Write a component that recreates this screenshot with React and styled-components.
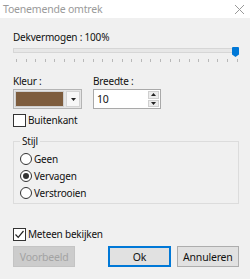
import React from "react";
import styled, { createGlobalStyle } from "styled-components";

const GlobalStyle = createGlobalStyle`
  html, body {
    margin: 0;
    padding: 0;
    background: #f0f0f0;
  }
  body {
    font-family: "Noto Sans", "Segoe UI", sans-serif;
    font-size: 10px;
    letter-spacing: -0.2px;
    color: #111;
  }
`;

const Window = styled.div`
  width: 250px;
  height: 279px;
  background: #f0f0f0;
  display: flex;
  flex-direction: column;
  overflow: hidden;
`;

const TitleBar = styled.div`
  height: 18px;
  background: #fff;
  display: flex;
  align-items: center;
  justify-content: space-between;
  padding: 0 6px 0 3px;
`;

const Title = styled.span`
  color: #9a9a9a;
  line-height: 16px;
  font-size: 10.5px;
`;

const Content = styled.div`
  padding: 11px 11px 0 13px;
  display: flex;
  flex-direction: column;
`;

const Label = styled.div`
  line-height: 16px;
  white-space: nowrap;
`;

const Slider = styled.div`
  position: relative;
  height: 28px;
`;

const Track = styled.div`
  margin-top: 3px;
  height: 3px;
  border: 1px solid #d6d6d6;
  background: #e7e7e7;
  margin-right: 2px;
`;

const Thumb = styled.div`
  position: absolute;
  top: 2px;
  right: 0;
  width: 7px;
  height: 10px;
  background: #0078d7;
  border-radius: 1px 1px 0 0;
  clip-path: polygon(0 0, 100% 0, 100% 75%, 50% 100%, 0 75%);
`;

const Ticks = styled.div`
  display: flex;
  justify-content: space-between;
  padding: 0 1px 0 3px;
  margin-top: 6px;
`;

const Tick = styled.span`
  width: 1px;
  height: 3px;
  background: #b8b8b8;
`;

const FieldRow = styled.div`
  display: flex;
  gap: 11px;
`;

const Field = styled.div`
  display: flex;
  flex-direction: column;
  width: ${(p) => p.w}px;
`;

const Combo = styled.div`
  height: 20px;
  box-sizing: border-box;
  border: 1px solid #b4b4b4;
  background: #e5e5e5;
  display: flex;
  padding: 1px;
  gap: 2px;
`;

const Swatch = styled.div`
  flex: 1;
  background: ${(p) => p.color};
  border: 1px solid #cfcfcf;
`;

const DropButton = styled.div`
  width: 12px;
  background: #f7f7f7;
  border: 1px solid #d4d4d4;
  display: flex;
  align-items: center;
  justify-content: center;
`;

const SpinBox = styled.div`
  height: 20px;
  box-sizing: border-box;
  border: 1px solid #a9a9a9;
  background: #fff;
  display: flex;
  align-items: center;
  padding: 1px 1px 1px 3px;
`;

const SpinValue = styled.span`
  flex: 1;
  line-height: 16px;
  font-size: 10.5px;
`;

const SpinButtons = styled.div`
  display: flex;
  flex-direction: column;
  gap: 1px;
  width: 11px;
  height: 16px;
`;

const SpinButton = styled.div`
  flex: 1;
  background: #ececec;
  border: 1px solid #cfcfcf;
  display: flex;
  align-items: center;
  justify-content: center;
`;

const CheckRow = styled.label`
  display: flex;
  align-items: center;
  gap: 2px;
  line-height: 16px;
  margin-top: ${(p) => p.mt || 0}px;
`;

const Box = styled.span`
  width: 13px;
  height: 13px;
  box-sizing: border-box;
  border: 1px solid #333;
  background: #fff;
  display: flex;
  align-items: center;
  justify-content: center;
`;

const Group = styled.fieldset`
  margin: 5px 0 0 0;
  padding: 1px 0 2px 6px;
  border: 1px solid #dcdcdc;
  display: flex;
  flex-direction: column;
`;

const Legend = styled.legend`
  padding: 0 2px;
  line-height: 16px;
`;

const RadioRow = styled.div`
  display: flex;
  align-items: center;
  height: 17px;
  gap: 2px;
`;

const Radio = styled.span`
  width: 12px;
  height: 12px;
  box-sizing: border-box;
  border: 1px solid #333;
  border-radius: 50%;
  background: #fff;
  display: flex;
  align-items: center;
  justify-content: center;
  &::after {
    content: "";
    width: 6px;
    height: 6px;
    border-radius: 50%;
    background: ${(p) => (p.checked ? "#333" : "transparent")};
  }
`;

const Buttons = styled.div`
  display: flex;
  margin-top: 4px;
`;

const Button = styled.div`
  width: 63px;
  height: 21px;
  box-sizing: border-box;
  display: flex;
  align-items: center;
  justify-content: center;
  font-size: 10.5px;
  background: ${(p) => (p.disabled ? "#cccccc" : "#e1e1e1")};
  color: ${(p) => (p.disabled ? "#a3a3a3" : "#111")};
  border: ${(p) =>
    p.primary ? "2px solid #0078d7" : p.disabled ? "1px solid #c4c4c4" : "1px solid #adadad"};
  margin-left: ${(p) => p.ml || 0}px;
`;

const Arrow = ({ up }) => (
  <svg width="5" height="3" viewBox="0 0 5 3">
    <path d={up ? "M0 3 L2.5 0 L5 3 Z" : "M0 0 L5 0 L2.5 3 Z"} fill="#222" />
  </svg>
);

export default function App() {
  return (
    <>
      <GlobalStyle />
      <Window>
        <TitleBar>
          <Title>Toenemende omtrek</Title>
          <svg width="9" height="9" viewBox="0 0 9 9">
            <path d="M0 0 L9 9 M9 0 L0 9" stroke="#999" strokeWidth="1" />
          </svg>
        </TitleBar>
        <Content>
          <Label>Dekvermogen : 100%</Label>
          <Slider>
            <Track />
            <Thumb />
            <Ticks>
              {Array.from({ length: 24 }, (_, i) => (
                <Tick key={i} />
              ))}
            </Ticks>
          </Slider>
          <FieldRow>
            <Field w={69}>
              <Label>Kleur :</Label>
              <Combo>
                <Swatch color="#7d5c3d" />
                <DropButton>
                  <Arrow />
                </DropButton>
              </Combo>
            </Field>
            <Field w={68}>
              <Label>Breedte :</Label>
              <SpinBox>
                <SpinValue>10</SpinValue>
                <SpinButtons>
                  <SpinButton>
                    <Arrow up />
                  </SpinButton>
                  <SpinButton>
                    <Arrow />
                  </SpinButton>
                </SpinButtons>
              </SpinBox>
            </Field>
          </FieldRow>
          <CheckRow mt={3}>
            <Box />
            Buitenkant
          </CheckRow>
          <Group>
            <Legend>Stijl</Legend>
            <RadioRow>
              <Radio />
              Geen
            </RadioRow>
            <RadioRow>
              <Radio checked />
              Vervagen
            </RadioRow>
            <RadioRow>
              <Radio />
              Verstrooien
            </RadioRow>
          </Group>
          <CheckRow mt={22}>
            <Box>
              <svg width="11" height="11" viewBox="0 0 11 11">
                <path d="M1.5 5.5 L4.2 8.3 L9.5 2" stroke="#222" strokeWidth="1.2" fill="none" />
              </svg>
            </Box>
            Meteen bekijken
          </CheckRow>
          <Buttons>
            <Button disabled>Voorbeeld</Button>
            <Button primary ml={33}>
              Ok
            </Button>
            <Button ml={6}>Annuleren</Button>
          </Buttons>
        </Content>
      </Window>
    </>
  );
}
